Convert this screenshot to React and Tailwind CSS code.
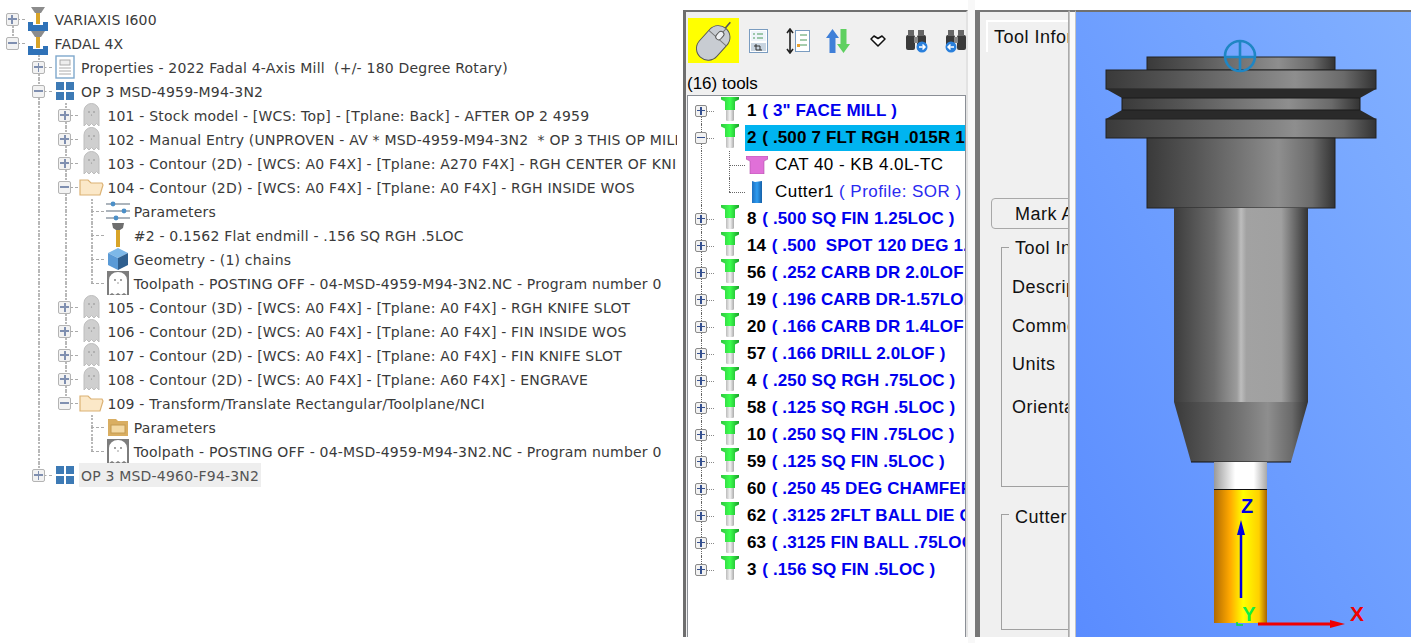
import React from 'react';

const Machine = () => (
  <svg width="20" height="24" viewBox="0 0 20 24">
    <path d="M3 0h14l-4 6H7z" fill="#8c8c8c" />
    <rect x="8" y="6" width="4" height="11" fill="#d8a428" />
    <path d="M0 15h5v3h10v-3h5v9H0z" fill="#2f72b8" />
  </svg>
);

const Doc = () => (
  <svg width="20" height="24" viewBox="0 0 20 24">
    <rect x="1" y="1" width="18" height="22" fill="#fff" stroke="#7fa8cc" strokeWidth="1.4" />
    <rect x="5" y="5" width="10" height="5" fill="#eee" stroke="#aaa" />
    <path d="M4 13h12M4 16h12M4 19h12" stroke="#aaa" />
  </svg>
);

const Grid = () => (
  <svg width="18" height="18" viewBox="0 0 18 18" fill="#3d7ab5">
    <rect x="0" y="0" width="8" height="8" />
    <rect x="10" y="0" width="8" height="8" />
    <rect x="0" y="10" width="8" height="8" />
    <rect x="10" y="10" width="8" height="8" />
  </svg>
);

const Ghost = () => (
  <svg width="17" height="24" viewBox="0 0 17 24">
    <path d="M1 23V8a7.5 7.5 0 0 1 15 0v15l-2.5-2.5L11 23l-2.5-2.5L6 23l-2.5-2.5z" fill="#cfcfcf" stroke="#bdbdbd" />
    <circle cx="6" cy="9" r=".8" fill="#888" />
    <circle cx="11" cy="9" r=".8" fill="#888" />
    <circle cx="8.5" cy="12" r=".6" fill="#888" />
  </svg>
);

const Folder = () => (
  <svg width="25" height="18" viewBox="0 0 25 18">
    <path d="M1 17V2h8l3 3h11l1 2-3 10z" fill="#fbe8c8" stroke="#dcb274" strokeWidth="1.2" />
  </svg>
);

const GoldFolder = () => (
  <svg width="20" height="18" viewBox="0 0 20 18">
    <path d="M0 1h8l2 2h10v15H0z" fill="#d9ae62" />
    <rect x="3" y="7" width="14" height="8" fill="#f3d9a4" stroke="#c49a50" />
  </svg>
);

const Sliders = () => (
  <svg width="24" height="20" viewBox="0 0 24 20">
    <path d="M0 3h24M0 10h24M0 17h24" stroke="#5b6b7b" strokeWidth="1.2" />
    <circle cx="7" cy="3" r="2.4" fill="#4b8fc8" />
    <circle cx="18" cy="10" r="2.4" fill="#4b8fc8" />
    <circle cx="10" cy="17" r="2.4" fill="#4b8fc8" />
  </svg>
);

const EndMill = () => (
  <svg width="14" height="24" viewBox="0 0 14 24">
    <path d="M1 0h12l-1 5-3 2H5L2 5z" fill="#6e6e6e" />
    <rect x="5" y="7" width="4" height="17" fill="#d8a428" />
  </svg>
);

const Cube = () => (
  <svg width="22" height="24" viewBox="0 0 22 24">
    <path d="M1 6l10-5 10 5-10 5z" fill="#7db8e8" />
    <path d="M1 6l10 5v12L1 18z" fill="#5a9ad6" />
    <path d="M21 6l-10 5v12l10-5z" fill="#2f5f8f" />
  </svg>
);

const Toolpath = () => (
  <svg width="24" height="24" viewBox="0 0 24 24">
    <rect x="1" y="0" width="22" height="24" fill="#7d7d7d" />
    <path d="M3 24V9a9 8 0 0 1 18 0v15l-3-2-3 2-3-2-3 2-3-2z" fill="#fff" />
    <circle cx="9" cy="9" r=".9" fill="#777" />
    <circle cx="15" cy="9" r=".9" fill="#777" />
    <circle cx="12" cy="12" r=".7" fill="#777" />
  </svg>
);

const PinTool = () => (
  <svg width="18" height="24" viewBox="0 0 18 24">
    <defs>
      <linearGradient id="pinGreen" x1="0" x2="1" y1="0" y2="0">
        <stop offset="0" stopColor="#2fc83f" />
        <stop offset=".5" stopColor="#3cff4e" />
        <stop offset="1" stopColor="#18a028" />
      </linearGradient>
      <linearGradient id="pinGrey" x1="0" x2="1" y1="0" y2="0">
        <stop offset="0" stopColor="#bbb" />
        <stop offset=".5" stopColor="#f4f4f4" />
        <stop offset="1" stopColor="#aaa" />
      </linearGradient>
    </defs>
    <rect x="5" y="12" width="8" height="12" rx="1.5" fill="url(#pinGrey)" />
    <path d="M0 0h18v2.5l-4 2V13H4V4.5l-4-2z" fill="url(#pinGreen)" />
  </svg>
);

const Holder = () => (
  <svg width="22" height="18" viewBox="0 0 22 18">
    <path d="M0 0h22v3l-4 2v13H4V5L0 3z" fill="#e070d8" stroke="#b050a8" strokeWidth=".6" />
  </svg>
);

const CutterIcon = () => (
  <svg width="12" height="24" viewBox="0 0 12 24">
    <defs>
      <linearGradient id="cutBlue" x1="0" x2="1" y1="0" y2="0">
        <stop offset="0" stopColor="#1c6fc0" />
        <stop offset=".5" stopColor="#2f9cf0" />
        <stop offset="1" stopColor="#1560a8" />
      </linearGradient>
    </defs>
    <path d="M1 1l3 1 7-1v22H1z" fill="url(#cutBlue)" />
  </svg>
);

const Dotted = ({ up, down }) => (
  <>
    {up && <span className="absolute left-1/2 top-0 h-1/2 border-l-2 border-dotted border-[#b8b8b8]" />}
    {down && <span className="absolute left-1/2 bottom-0 h-1/2 border-l-2 border-dotted border-[#b8b8b8]" />}
  </>
);

const LeftBox = ({ open }) => (
  <span className="relative z-10 flex h-[13px] w-[13px] items-center justify-center rounded-[2px] border border-[#b4b4b4] bg-[#f2f2f2]">
    <span className="absolute h-[1.5px] w-[9px] bg-[#7f8fb0]" />
    {!open && <span className="absolute h-[9px] w-[1.5px] bg-[#7f8fb0]" />}
  </span>
);

const rows = [
  { lv: 0, exp: '+', line: 'down', guides: [], icon: <Machine />, text: 'VARIAXIS I600' },
  { lv: 0, exp: '-', line: 'up', guides: [], icon: <Machine />, text: 'FADAL 4X' },
  { lv: 1, exp: '+', line: 'both', guides: [0], icon: <Doc />, text: 'Properties - 2022 Fadal 4-Axis Mill  (+/- 180 Degree Rotary)' },
  { lv: 1, exp: '-', line: 'both', guides: [0], icon: <Grid />, text: 'OP 3 MSD-4959-M94-3N2' },
  { lv: 2, exp: '+', line: 'both', guides: [0, 1], icon: <Ghost />, text: '101 - Stock model - [WCS: Top] - [Tplane: Back] - AFTER OP 2 4959' },
  { lv: 2, exp: '+', line: 'both', guides: [0, 1], icon: <Ghost />, text: '102 - Manual Entry (UNPROVEN - AV * MSD-4959-M94-3N2  * OP 3 THIS OP MILLS' },
  { lv: 2, exp: '+', line: 'both', guides: [0, 1], icon: <Ghost />, text: '103 - Contour (2D) - [WCS: A0 F4X] - [Tplane: A270 F4X] - RGH CENTER OF KNIFE' },
  { lv: 2, exp: '-', line: 'both', guides: [0, 1], icon: <Folder />, text: '104 - Contour (2D) - [WCS: A0 F4X] - [Tplane: A0 F4X] - RGH INSIDE WOS' },
  { lv: 3, line: 'both', guides: [0, 1, 1], icon: <Sliders />, text: 'Parameters' },
  { lv: 3, line: 'both', guides: [0, 1, 1], icon: <EndMill />, text: '#2 - 0.1562 Flat endmill - .156 SQ RGH .5LOC' },
  { lv: 3, line: 'both', guides: [0, 1, 1], icon: <Cube />, text: 'Geometry - (1) chains' },
  { lv: 3, line: 'up', guides: [0, 1, 1], icon: <Toolpath />, text: 'Toolpath - POSTING OFF - 04-MSD-4959-M94-3N2.NC - Program number 0' },
  { lv: 2, exp: '+', line: 'both', guides: [0, 1], icon: <Ghost />, text: '105 - Contour (3D) - [WCS: A0 F4X] - [Tplane: A0 F4X] - RGH KNIFE SLOT' },
  { lv: 2, exp: '+', line: 'both', guides: [0, 1], icon: <Ghost />, text: '106 - Contour (2D) - [WCS: A0 F4X] - [Tplane: A0 F4X] - FIN INSIDE WOS' },
  { lv: 2, exp: '+', line: 'both', guides: [0, 1], icon: <Ghost />, text: '107 - Contour (2D) - [WCS: A0 F4X] - [Tplane: A0 F4X] - FIN KNIFE SLOT' },
  { lv: 2, exp: '+', line: 'both', guides: [0, 1], icon: <Ghost />, text: '108 - Contour (2D) - [WCS: A0 F4X] - [Tplane: A60 F4X] - ENGRAVE' },
  { lv: 2, exp: '-', line: 'up', guides: [0, 1], icon: <Folder />, text: '109 - Transform/Translate Rectangular/Toolplane/NCI' },
  { lv: 3, line: 'both', guides: [0, 1, 0], icon: <GoldFolder />, text: 'Parameters' },
  { lv: 3, line: 'up', guides: [0, 1, 0], icon: <Toolpath />, text: 'Toolpath - POSTING OFF - 04-MSD-4959-M94-3N2.NC - Program number 0' },
  { lv: 1, exp: '+', line: 'up', guides: [0], icon: <Grid />, text: 'OP 3 MSD-4960-F94-3N2', hl: true },
];

const OpRow = ({ row }) => (
  <div className="flex h-6 items-center">
    {row.guides.map((g, i) => (
      <span key={i} className="relative h-full w-[26.4px] shrink-0">
        {g ? <Dotted up down /> : null}
      </span>
    ))}
    <span className="relative flex h-full w-[26.4px] shrink-0 items-center justify-center">
      <Dotted up={row.line !== 'down'} down={row.line !== 'up'} />
      <span className="absolute left-1/2 right-0 top-1/2 border-t border-dashed border-[#aaa]" />
      {row.exp && <LeftBox open={row.exp === '-'} />}
    </span>
    <span className="flex h-full w-[26.4px] shrink-0 items-center justify-center">{row.icon}</span>
    <span
      className={`ml-[1px] h-6 whitespace-pre px-[2px] pt-px text-[14px] leading-6 tracking-[0.2px] ${row.hl ? 'bg-[#eeeeee] text-[#555]' : 'text-[#3a3a3a]'}`}
    >
      {row.text}
    </span>
  </div>
);

const tools = [
  ['1', '( 3" FACE MILL )'],
  ['2', '( .500 7 FLT RGH .015R 1.25LOC )', 'open'],
  ['8', '( .500 SQ FIN 1.25LOC )'],
  ['14', '( .500  SPOT 120 DEG 1.5LOF )'],
  ['56', '( .252 CARB DR 2.0LOF )'],
  ['19', '( .196 CARB DR-1.57LOF )'],
  ['20', '( .166 CARB DR 1.4LOF )'],
  ['57', '( .166 DRILL 2.0LOF )'],
  ['4', '( .250 SQ RGH .75LOC )'],
  ['58', '( .125 SQ RGH .5LOC )'],
  ['10', '( .250 SQ FIN .75LOC )'],
  ['59', '( .125 SQ FIN .5LOC )'],
  ['60', '( .250 45 DEG CHAMFER )'],
  ['62', '( .3125 2FLT BALL DIE CUT )'],
  ['63', '( .3125 FIN BALL .75LOC )'],
  ['3', '( .156 SQ FIN .5LOC )'],
];

const ToolBox = ({ open }) => (
  <span className="relative z-10 flex h-[12px] w-[12px] items-center justify-center rounded-[2px] border border-[#8a8a8a] bg-[#f2f2f2]">
    <span className="absolute h-[1.5px] w-[8px] bg-[#35508f]" />
    {!open && <span className="absolute h-[8px] w-[1.5px] bg-[#35508f]" />}
  </span>
);

const ToolRow = ({ num, name, open, first, last }) => (
  <>
    <div className="flex h-[27px] items-center">
      <span className="relative flex h-full w-[26px] shrink-0 items-center justify-center">
        {!first && <span className="absolute left-1/2 top-0 h-1/2 border-l border-dotted border-[#666]" />}
        {!last && <span className="absolute left-1/2 bottom-0 h-1/2 border-l border-dotted border-[#666]" />}
        <span className="absolute left-1/2 right-0 top-1/2 border-t border-dotted border-[#888]" />
        <ToolBox open={open} />
      </span>
      <span className="flex h-full w-[31px] shrink-0 items-center justify-center pb-[3px]">
        <PinTool />
      </span>
      <span className={`flex h-[26px] flex-1 items-center whitespace-pre pl-[2px] text-[17px] font-bold ${open ? 'bg-[#00b4f0]' : ''}`}>
        <span className="text-black">{num} </span>
        <span className={`ml-px tracking-[0.15px] ${open ? 'text-black' : 'text-[#0000ee]'}`}>{name}</span>
      </span>
    </div>
    {open && (
      <>
        <ChildRow icon={<Holder />} label="CAT 40 - KB 4.0L-TC" />
        <ChildRow icon={<CutterIcon />} label="Cutter1" extra=" ( Profile: SOR )" end />
      </>
    )}
  </>
);

const ChildRow = ({ icon, label, extra, end }) => (
  <div className="flex h-[27px] items-center">
    <span className="relative h-full w-[26px] shrink-0">
      <span className="absolute left-1/2 top-0 h-full border-l border-dotted border-[#666]" />
    </span>
    <span className="relative h-full w-[31px] shrink-0">
      <span className={`absolute left-[15px] top-0 border-l border-dotted border-[#666] ${end ? 'h-1/2' : 'h-full'}`} />
      <span className="absolute left-[15px] right-0 top-1/2 border-t border-dotted border-[#666]" />
    </span>
    <span className="flex h-full w-[24px] shrink-0 items-center justify-center">{icon}</span>
    <span className="ml-[6px] whitespace-pre text-[17px] tracking-[0.45px] text-black">
      {label}
      {extra && <span className="text-[#2a2af0]">{extra}</span>}
    </span>
  </div>
);

const MouseIcon = () => (
  <svg width="42" height="42" viewBox="0 0 36 36">
    <path d="M25 10l7-8" stroke="#555" strokeWidth="1.4" fill="none" />
    <g transform="rotate(42 17 20)">
      <rect x="7" y="3" width="20" height="33" rx="10" fill="#c8ccd2" stroke="#555" strokeWidth=".8" />
      <path d="M7 14h20M17 3v11" stroke="#777" strokeWidth=".8" />
      <rect x="14.5" y="7" width="5" height="8" rx="2.5" fill="#eef0f4" stroke="#555" strokeWidth=".8" />
    </g>
  </svg>
);

const ListIcon = () => (
  <svg width="19" height="24" viewBox="0 0 19 24">
    <rect x=".5" y=".5" width="18" height="23" fill="#fff" stroke="#7a9cc0" />
    <rect x="2" y="2" width="15" height="10" fill="#eef4fa" />
    <path d="M4 5h2M8 5h6M4 9h2M8 9h6" stroke="#4a9a5a" />
    <rect x="2" y="14" width="15" height="8" fill="#c8d4e0" />
    <path d="M7 15v6h6M5 17h6v4" stroke="#333" fill="none" />
  </svg>
);

const ExpandIcon = () => (
  <svg width="24" height="26" viewBox="0 0 24 26">
    <path d="M4 1v24M1 5l3-4 3 4M1 21l3 4 3-4" stroke="#222" strokeWidth="1.6" fill="none" />
    <rect x="9.5" y="2.5" width="14" height="21" fill="#fff" stroke="#7a9cc0" />
    <path d="M14 7h7M14 12h7M14 17h7" stroke="#4a9a5a" />
    <rect x="11" y="16" width="3" height="3" fill="#e8a030" />
  </svg>
);

const SortIcon = () => (
  <svg width="26" height="26" viewBox="0 0 26 26">
    <path d="M7.5 1L14 10h-3.5v15h-6V10H1z" fill="#3f7fd8" />
    <path d="M18.5 25L12 16h3.5V1h6v15H25z" fill="#5fd060" />
  </svg>
);

const Chevrons = () => (
  <svg width="16" height="12" viewBox="0 0 16 12">
    <path d="M1 4l3-3 4 2.5L12 1l3 3-7 7z" fill="#fff" stroke="#111" strokeWidth="1.5" strokeLinejoin="round" />
  </svg>
);

const Binoculars = ({ back }) => (
  <svg width="24" height="24" viewBox="0 0 24 24">
    <rect x="1" y="6" width="9" height="15" rx="2" fill="#3a3a3a" />
    <rect x="12" y="6" width="9" height="15" rx="2" fill="#3a3a3a" />
    <rect x="3" y="1" width="6" height="6" fill="#666" />
    <rect x="13" y="1" width="6" height="6" fill="#666" />
    <rect x="9" y="8" width="4" height="6" fill="#888" />
    <circle cx={back ? 6 : 17} cy="18" r="5.5" fill="#2a80dc" />
    <path d={back ? 'M3 18h6M5.5 15.5L3 18l2.5 2.5' : 'M14 18h6M17.5 15.5L20 18l-2.5 2.5'} stroke="#fff" strokeWidth="1.5" fill="none" />
  </svg>
);

const ToolModel = () => (
  <svg className="block h-full w-full" viewBox="1076 12 335 625">
    <defs>
      <linearGradient id="metalA" x1="0" x2="1" y1="0" y2="0">
        <stop offset="0" stopColor="#3a3a3a" />
        <stop offset=".25" stopColor="#555" />
        <stop offset=".7" stopColor="#8e8e8e" />
        <stop offset=".88" stopColor="#6a6a6a" />
        <stop offset="1" stopColor="#333" />
      </linearGradient>
      <linearGradient id="metalB" x1="0" x2="1" y1="0" y2="0">
        <stop offset="0" stopColor="#3c3c3c" />
        <stop offset=".3" stopColor="#6c6c6c" />
        <stop offset=".47" stopColor="#9c9c9c" />
        <stop offset=".5" stopColor="#bdbdbd" />
        <stop offset=".54" stopColor="#a2a2a2" />
        <stop offset=".8" stopColor="#a0a0a0" />
        <stop offset="1" stopColor="#333" />
      </linearGradient>
      <linearGradient id="collar" x1="0" x2="1" y1="0" y2="0">
        <stop offset="0" stopColor="#9a9a9a" />
        <stop offset=".4" stopColor="#fff" />
        <stop offset=".75" stopColor="#fff" />
        <stop offset="1" stopColor="#a8a8a8" />
      </linearGradient>
      <linearGradient id="shank" x1="0" x2="1" y1="0" y2="0">
        <stop offset="0" stopColor="#b06a00" />
        <stop offset=".3" stopColor="#ffa800" />
        <stop offset=".55" stopColor="#ffff00" />
        <stop offset=".85" stopColor="#ffd000" />
        <stop offset="1" stopColor="#a86400" />
      </linearGradient>
    </defs>
    <rect x="1147" y="57" width="188" height="13" fill="url(#metalA)" stroke="#222" />
    <rect x="1106" y="70" width="270" height="19" fill="url(#metalA)" stroke="#222" />
    <path d="M1106 89h270l-16 9v12l16 9h-270l16-9V98z" fill="#2a2a2a" />
    <rect x="1122" y="98" width="238" height="12" fill="url(#metalA)" stroke="#1a1a1a" />
    <rect x="1106" y="119" width="270" height="19" fill="url(#metalA)" stroke="#222" />
    <rect x="1147" y="138" width="188" height="70" fill="url(#metalA)" stroke="#222" />
    <rect x="1174" y="208" width="134" height="194" fill="url(#metalB)" />
    <path d="M1174 402h134l-17 60h-100z" fill="url(#metalA)" />
    <path d="M1191 462h100" stroke="#111" strokeWidth="1.2" />
    <rect x="1214" y="462" width="53" height="27" fill="url(#collar)" />
    <rect x="1214" y="489" width="53" height="134" fill="url(#shank)" />
    <path d="M1214 489.5h53" stroke="#111" strokeWidth="1.2" />
    <g fill="none" stroke="#1f86c4" strokeWidth="2.6">
      <circle cx="1240" cy="56" r="15" />
      <path d="M1240 41v30M1225 57h30" />
    </g>
    <path d="M1241 598V530" stroke="#0000e0" strokeWidth="2.5" />
    <path d="M1241 520l-4 15h8z" fill="#0000e0" />
    <path d="M1258 624h72" stroke="#f00000" strokeWidth="3" />
    <path d="M1345 624l-15-4v8z" fill="#f00000" />
    <path d="M1237 622v3h6" stroke="#00e040" strokeWidth="1.5" fill="none" />
    <text x="1247" y="513" textAnchor="middle" fontSize="20" fontWeight="700" fill="#0000e0">Z</text>
    <text x="1249" y="621" textAnchor="middle" fontSize="20" fontWeight="700" fill="#10f040">Y</text>
    <text x="1357" y="621" textAnchor="middle" fontSize="21" fontWeight="700" fill="#f00000">X</text>
  </svg>
);

export default function App() {
  return (
    <div className="flex h-[643px] w-[1418px] overflow-hidden bg-white font-['Liberation_Sans',sans-serif]">
      {/* operations tree */}
      <div className="w-[677px] shrink-0 overflow-hidden pt-[7px] font-['DejaVu_Sans',sans-serif]">
        <div className="-ml-[1.2px]">
          {rows.map((row, i) => (
            <OpRow key={i} row={row} />
          ))}
        </div>
      </div>
      <div className="w-[6px] shrink-0" />

      {/* tool manager */}
      <div className="mt-[10px] flex h-[627px] w-[285px] shrink-0 flex-col border-l-[3px] border-t-[2px] border-r-[2px] border-l-[#6e6e6e] border-t-[#707070] border-r-[#e2e2e2] bg-[#f0f0f0]">
        <div className="mt-[6px] flex h-[45px] shrink-0 items-center overflow-hidden">
          <div className="ml-[2px] flex h-[45px] w-[51px] shrink-0 items-center justify-center bg-[#ffff00]">
            <MouseIcon />
          </div>
          <span className="flex w-[39.6px] shrink-0 justify-center"><ListIcon /></span>
          <span className="flex w-[39.6px] shrink-0 justify-center"><ExpandIcon /></span>
          <span className="flex w-[39.6px] shrink-0 justify-center"><SortIcon /></span>
          <span className="flex w-[39.6px] shrink-0 justify-center"><Chevrons /></span>
          <span className="flex w-[39.6px] shrink-0 justify-center"><Binoculars /></span>
          <span className="flex w-[39.6px] shrink-0 justify-center"><Binoculars back /></span>
        </div>
        <div className="mt-[10px] h-[22px] shrink-0 pl-[1px] text-[17px] leading-[22px] text-black">(16) tools</div>
        <div className="ml-[1px] flex-1 overflow-hidden border border-b-0 border-[#8b8f96] bg-white pt-[1px]">
          {tools.map((t, i) => (
            <ToolRow key={t[0]} num={t[0]} name={t[1]} open={t[2] === 'open'} first={i === 0} last={i === tools.length - 1} />
          ))}
        </div>
      </div>
      <div className="w-[7px] shrink-0 bg-[#f8f8f8]" />

      {/* tool information, mostly covered by the preview */}
      <div className="mt-[10px] flex h-[627px] w-[94px] shrink-0 flex-col overflow-hidden border-l-[5px] border-t-[2px] border-r border-l-[#777] border-t-[#777] border-r-[#aaa] bg-[#f0f0f0] text-[18px] leading-[22px] tracking-[0.5px] text-[#111]">
        <div className="ml-[6px] mt-[8px] h-[32px] shrink-0 whitespace-pre border-l-2 border-t-2 border-white pl-[6px] pt-[4px]">Tool Information</div>
        <div className="ml-[11px] mt-[146px] flex h-[31px] w-[120px] shrink-0 items-center whitespace-pre rounded-[4px] border border-[#a8a8a8] pl-[23px]">Mark All</div>
        <div className="ml-[21px] mt-[18px] h-[240px] w-[120px] shrink-0 border-b border-l border-t border-[#a0a0a0]">
          <div className="-mt-[11px] ml-[7px] w-fit whitespace-pre bg-[#f0f0f0] px-[6px]">Tool Info</div>
          <div className="ml-[10px] mt-[17px] whitespace-pre">Description</div>
          <div className="ml-[10px] mt-[17px] whitespace-pre">Comment</div>
          <div className="ml-[10px] mt-[16px] whitespace-pre">Units</div>
          <div className="ml-[10px] mt-[21px] whitespace-pre">Orientation</div>
        </div>
        <div className="ml-[21px] mt-[27px] h-[116px] w-[120px] shrink-0 border-b border-l border-t border-[#a0a0a0]">
          <div className="-mt-[9px] ml-[7px] w-fit whitespace-pre bg-[#f0f0f0] px-[6px]">Cutter</div>
        </div>
      </div>
      <div className="mt-[10px] h-[627px] w-[7px] shrink-0 border-x border-[#c4c4c4] border-t-2 border-t-[#777] bg-[#fafafa]" />

      {/* 3d preview */}
      <div className="mt-[10px] h-[627px] w-[335px] shrink-0 border-t-2 border-[#707070] bg-linear-to-tr from-[#5a8cff] to-[#82b0ff]">
        <ToolModel />
      </div>
    </div>
  );
}
